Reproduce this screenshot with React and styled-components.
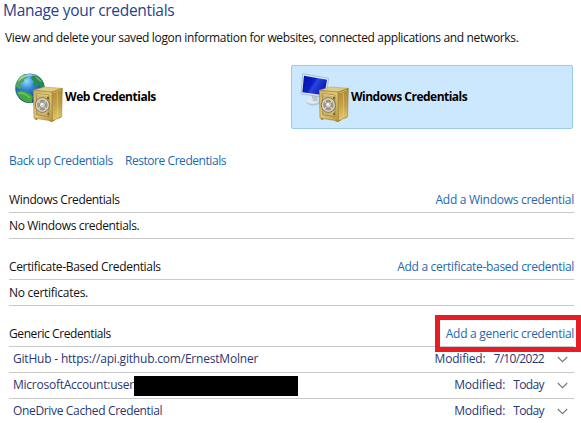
import React from "react";
import styled, { createGlobalStyle } from "styled-components";

const GlobalStyle = createGlobalStyle`
  * { box-sizing: border-box; }
  body { margin: 0; background: #fff; overflow: hidden; }
`;

const Page = styled.main`
  width: 581px;
  height: 423px;
  overflow: hidden;
  background: #fff;
  color: #111;
  font: 12px/16px "Open Sans", "Noto Sans", sans-serif;
  white-space: nowrap;
`;

const Title = styled.h1`
  margin: 0;
  padding-left: 3px;
  height: 30px;
  font-size: 15.5px;
  line-height: 21px;
  font-weight: 400;
  letter-spacing: ${(p) => p.$ls}px;
  color: #1f4487;
`;

const Intro = styled.p`
  margin: 0;
  padding-left: 5px;
  height: 35px;
  letter-spacing: ${(p) => p.$ls}px;
`;

const Text = styled.span`
  letter-spacing: ${(p) => p.$ls || 0}px;
`;

const Link = styled.a`
  letter-spacing: ${(p) => p.$ls || 0}px;
  color: #1d68b3;
`;

const Tiles = styled.div`
  display: grid;
  grid-template-columns: 282px 282px;
  padding-left: 9px;
  height: 64px;
`;

const Tile = styled.div`
  display: flex;
  align-items: center;
  height: 64px;
  padding-left: ${(p) => (p.$selected ? 8 : 4)}px;
  border: 1px solid ${(p) => (p.$selected ? "#99cbe8" : "transparent")};
  border-radius: 2px;
  background: ${(p) => (p.$selected ? "#cce8ff" : "transparent")};
  color: #000;
  font-weight: 700;
`;

const IconSvg = styled.svg`
  flex: none;
  width: 51px;
  height: 60px;
  margin-top: -3px;
`;

const Actions = styled.nav`
  display: flex;
  gap: 12px;
  padding: 24px 0 0 9px;
  height: 58px;
`;

const Section = styled.section`
  width: 565px;
  margin: 0 0 15px 9px;
`;

const Row = styled.div`
  display: flex;
  align-items: center;
  height: 26px;
  border-bottom: 1px solid #c9c9c9;
`;

const HeaderRow = styled(Row)`
  justify-content: space-between;
`;

const HighlightAnchor = styled.div`
  position: relative;
  display: flex;
`;

const Highlight = styled.div`
  position: absolute;
  top: -11px;
  right: -7px;
  width: 146px;
  height: 37px;
  border: 5px solid #e81c24;
`;

const CredentialRow = styled(Row)`
  padding: 0 6px 2px 4px;
  color: #2b3773;
`;

const Redaction = styled.span`
  width: 164px;
  height: 20px;
  margin-top: 2px;
  background: #000;
`;

const Modified = styled.span`
  display: flex;
  gap: 8px;
  margin-left: auto;
`;

const ChevronSvg = styled.svg`
  width: 11px;
  height: 7px;
  margin: 2px 0 0 13px;
`;

function Chevron() {
  return (
    <ChevronSvg viewBox="0 0 11 7">
      <path d="M0.8 1 5.5 5.7 10.2 1" fill="none" stroke="#777" strokeWidth="1.1" />
    </ChevronSvg>
  );
}

function Safe({ id }) {
  return (
    <g>
      <defs>
        <linearGradient id={id + "f"} x1="0" y1="0" x2="1" y2="1">
          <stop offset="0" stopColor="#cdb262" />
          <stop offset=".5" stopColor="#dcc67c" />
          <stop offset="1" stopColor="#b8963a" />
        </linearGradient>
        <linearGradient id={id + "s"} x1="0" y1="0" x2="0" y2="1">
          <stop offset="0" stopColor="#ad8a31" />
          <stop offset=".5" stopColor="#c2a048" />
          <stop offset="1" stopColor="#e3cb6c" />
        </linearGradient>
      </defs>
      <path d="M74 155v5l8 3v-7zM118 160v6l8 2 9-5v-6zM146 153v5l7-4v-6z" fill="#9a7c2c" />
      <path d="M70 73 103 63 157 67 126 78z" fill="#e0cb87" stroke="#b99a45" strokeWidth="1.5" />
      <path d="M126 78 157 67 155 152 127 165z" fill={`url(#${id}s)`} stroke="#96731d" strokeWidth="1.5" />
      <path d="M70 73 126 78 127 165 72 156z" fill={`url(#${id}f)`} stroke="#a58537" strokeWidth="2" />
      <path d="M79 83 117 87 117 152 80 146z" fill="#cdb56a" stroke="#94752f" strokeWidth="2" />
      <path d="M80 85 116 89" stroke="#eee0a5" strokeWidth="2" />
      <path d="M142 80v72M129 81 153 72" stroke="#ebd681" strokeWidth="2.5" opacity=".65" />
      <path d="M111 93h6v7h-6zM112 140h5v7h-5z" fill="#765f2b" />
      <ellipse cx="97" cy="117" rx="21" ry="22" fill="#bbb28e" stroke="#6f6a59" strokeWidth="2.5" />
      <ellipse cx="97" cy="117" rx="17.5" ry="18.5" fill="#9d9982" stroke="#dedacb" strokeWidth="3.5" />
      <path d="M85 105 109 129M109 105 85 129" stroke="#d8d6cc" strokeWidth="4" />
      <circle cx="97" cy="117" r="9" fill="#d5d4ce" stroke="#817e70" strokeWidth="2" />
      <path d="M91 117a6 6 0 0 1 6-6l2 5z" fill="#fff" />
    </g>
  );
}

function WebIcon() {
  return (
    <IconSvg viewBox="12 0 153 180">
      <defs>
        <radialGradient id="globe" cx=".38" cy=".25" r=".8">
          <stop offset="0" stopColor="#8fdcff" />
          <stop offset=".4" stopColor="#2c7fd0" />
          <stop offset="1" stopColor="#092f7c" />
        </radialGradient>
      </defs>
      <circle cx="60" cy="67" r="44" fill="url(#globe)" stroke="#2a5c9c" strokeWidth="1" />
      <path d="M20 50C24 36 35 26 47 24l8 4-3 7-9 4-2 8-9 4-2 7 5 7-6 4-9-6-4-4z" fill="#4fa653" />
      <path d="M19 78c11-6 23-5 31 1 8 2 13 6 18 13l-2 18c-18 2-38-10-47-32z" fill="#43a83d" />
      <path d="M67 26c15 2 24 8 31 19l5 20-10 4-3-12-9-3-4 8-9-4 3-12-9-9 4-5z" fill="#288d4b" />
      <path d="M26 83c12-6 23 3 34 12M25 46 39 31M77 33l16 13" fill="none" stroke="#98d86b" strokeWidth="4" opacity=".65" />
      <path d="M25 44C36 24 63 20 81 30 62 27 43 32 25 44z" fill="#dff7ff" opacity=".55" />
      <Safe id="web" />
    </IconSvg>
  );
}

function WindowsIcon() {
  return (
    <IconSvg viewBox="12 0 153 180">
      <defs>
        <linearGradient id="screen" x1="0" y1=".2" x2="1" y2=".7">
          <stop offset="0" stopColor="#0713a5" />
          <stop offset=".4" stopColor="#0c20c9" />
          <stop offset=".5" stopColor="#2845df" />
          <stop offset="1" stopColor="#0710ad" />
        </linearGradient>
      </defs>
      <ellipse cx="52" cy="108" rx="20" ry="10" fill="#b9c8d2" stroke="#a7b6be" />
      <ellipse cx="50" cy="105" rx="18" ry="8" fill="#e3eaee" />
      <path d="M47 86h19l-2 20H51z" fill="#b7c6d0" />
      <path d="M20 23 98 37 90 94 15 84z" fill="#d9e7ef" stroke="#8eafc1" strokeWidth="2" />
      <path d="M24 29 93 41 85 88 19 79z" fill="url(#screen)" />
      <Safe id="win" />
    </IconSvg>
  );
}

function Credential({ name, ls, redacted, modified, dateLs }) {
  return (
    <CredentialRow>
      <Text $ls={ls}>{name}</Text>
      {redacted && <Redaction />}
      <Modified>
        <Text $ls={-0.2}>Modified:</Text>
        <Text $ls={dateLs}>{modified}</Text>
      </Modified>
      <Chevron />
    </CredentialRow>
  );
}

export default function App() {
  return (
    <Page>
      <GlobalStyle />
      <Title $ls={-0.3}>Manage your credentials</Title>
      <Intro $ls={-0.34}>
        View and delete your saved logon information for websites, connected applications and networks.
      </Intro>
      <Tiles>
        <Tile>
          <WebIcon />
          <Text $ls={-0.47}>Web Credentials</Text>
        </Tile>
        <Tile $selected>
          <WindowsIcon />
          <Text $ls={-0.52}>Windows Credentials</Text>
        </Tile>
      </Tiles>
      <Actions>
        <Link $ls={-0.36}>Back up Credentials</Link>
        <Link $ls={-0.44}>Restore Credentials</Link>
      </Actions>
      <Section>
        <HeaderRow>
          <Text $ls={-0.36}>Windows Credentials</Text>
          <Link $ls={-0.28}>Add a Windows credential</Link>
        </HeaderRow>
        <Row>
          <Text $ls={-0.34}>No Windows credentials.</Text>
        </Row>
      </Section>
      <Section>
        <HeaderRow>
          <Text $ls={-0.34}>Certificate-Based Credentials</Text>
          <Link $ls={-0.3}>Add a certificate-based credential</Link>
        </HeaderRow>
        <Row>
          <Text $ls={-0.28}>No certificates.</Text>
        </Row>
      </Section>
      <Section>
        <HeaderRow>
          <Text $ls={-0.41}>Generic Credentials</Text>
          <HighlightAnchor>
            <Link $ls={-0.29}>Add a generic credential</Link>
            <Highlight />
          </HighlightAnchor>
        </HeaderRow>
        <Credential name="GitHub - https://api.github.com/ErnestMolner" ls={-0.2} modified="7/10/2022" dateLs={-0.7} />
        <Credential name="MicrosoftAccount:user" ls={-0.25} redacted modified="Today" dateLs={-0.6} />
        <Credential name="OneDrive Cached Credential" ls={-0.34} modified="Today" dateLs={-0.6} />
      </Section>
    </Page>
  );
}
